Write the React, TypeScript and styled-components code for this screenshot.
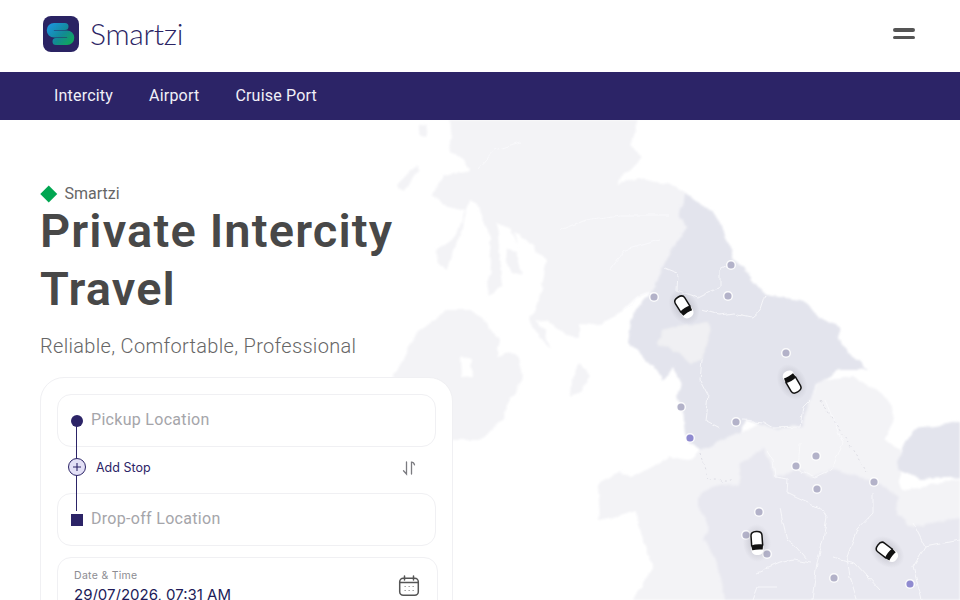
import React from "react";
import styled, { createGlobalStyle } from "styled-components";

const GlobalStyle = createGlobalStyle`
  html, body {
    margin: 0;
    padding: 0;
    background: #fff;
    font-family: Inter, "Liberation Sans", sans-serif;
  }
`;

const Page = styled.div`
  width: 960px;
  height: 600px;
  overflow: hidden;
`;

const Header = styled.header`
  height: 72px;
  box-sizing: border-box;
  display: flex;
  align-items: center;
  justify-content: space-between;
  padding: 0 45px 4px 43px;
  background: #fff;
`;

const Brand = styled.div`
  display: flex;
  align-items: center;
  gap: 11px;
`;

const Wordmark = styled.span`
  padding-bottom: 3px;
  font-family: Lato, sans-serif;
  font-weight: 300;
  font-size: 30px;
  letter-spacing: -0.3px;
  color: #2b2464;
`;

const MenuButton = styled.button`
  display: flex;
  flex-direction: column;
  gap: 4px;
  padding: 0;
  border: none;
  background: none;
  margin-top: -1px;
`;

const MenuBar = styled.span`
  display: block;
  width: 22px;
  height: 3.5px;
  border-radius: 2px;
  background: #555;
`;

const Nav = styled.nav`
  height: 48px;
  box-sizing: border-box;
  display: flex;
  align-items: center;
  gap: 36px;
  padding: 0 0 2px 54px;
  background: #2c2467;
`;

const NavLink = styled.a`
  font-family: Roboto, sans-serif;
  font-size: 16px;
  letter-spacing: 0.2px;
  color: #f1f0f8;
`;

const Hero = styled.section`
  position: relative;
  height: 480px;
  padding: 64px 0 0 40px;
  box-sizing: border-box;
  overflow: hidden;
`;

const MapLayer = styled.svg`
  position: absolute;
  left: 0;
  top: 0;
`;

const HeroContent = styled.div`
  position: relative;
`;

const Tag = styled.div`
  display: flex;
  align-items: center;
  gap: 8px;
  height: 18px;
  font-family: Roboto, sans-serif;
  font-size: 16px;
  color: #666;
`;

const Diamond = styled.span`
  width: 11.5px;
  height: 11.5px;
  margin: 1px 2.5px 0;
  background: #00a651;
  transform: rotate(45deg);
`;

const Title = styled.h1`
  margin: 0;
  width: 400px;
  font-family: Roboto, sans-serif;
  font-weight: 600;
  font-size: 47px;
  line-height: 58px;
  letter-spacing: 1.15px;
  color: #484848;
`;

const Subtitle = styled.p`
  margin: 14px 0 0;
  font-family: Roboto, sans-serif;
  font-weight: 300;
  font-size: 20px;
  line-height: 28px;
  letter-spacing: 0.32px;
  color: #666;
`;

const Card = styled.div`
  position: relative;
  width: 413px;
  box-sizing: border-box;
  margin-top: 17px;
  padding: 16px 16px 24px;
  background: #fff;
  border: 1px solid #f0f0f3;
  border-radius: 24px;
`;

const Field = styled.div`
  height: 53px;
  box-sizing: border-box;
  display: flex;
  align-items: center;
  padding: 0 0 2px 33px;
  border: 1px solid #f0f0f3;
  border-radius: 14px;
  font-family: Roboto, sans-serif;
  font-size: 16px;
  letter-spacing: 0.3px;
  color: #a5a5aa;
  background: #fff;
`;

const StopRow = styled.div`
  height: 46px;
  box-sizing: border-box;
  display: flex;
  align-items: center;
  justify-content: space-between;
  padding: 0 19px 5px 39px;
`;

const AddStop = styled.span`
  font-size: 12.5px;
  font-weight: 400;
  color: #2c2467;
`;

const RouteLine = styled.span`
  position: absolute;
  left: 35px;
  top: 43px;
  width: 1px;
  height: 90px;
  background: #2c2467;
`;

const RouteDot = styled.span`
  position: absolute;
  left: 30px;
  top: 37px;
  width: 12px;
  height: 12px;
  border-radius: 50%;
  background: #2c2467;
`;

const RouteSquare = styled.span`
  position: absolute;
  left: 30px;
  top: 136px;
  width: 12px;
  height: 12px;
  background: #2c2467;
`;

const RoutePlus = styled.span`
  position: absolute;
  left: 27px;
  top: 80px;
  width: 18px;
  height: 18px;
  box-sizing: border-box;
  display: flex;
  align-items: center;
  justify-content: center;
  border: 1px solid #2c2467;
  border-radius: 50%;
  background: #e3e0f6;
`;

const DateField = styled.div`
  width: 381px;
  height: 64px;
  box-sizing: border-box;
  margin-top: 11px;
  padding: 11px 17px 0 16px;
  display: flex;
  justify-content: space-between;
  border: 1px solid #f0f0f3;
  border-radius: 14px;
`;

const DateLabel = styled.div`
  font-size: 10.5px;
  line-height: 13px;
  letter-spacing: 0.3px;
  color: #8c8c92;
`;

const DateValue = styled.div`
  margin-top: 4px;
  font-size: 15px;
  line-height: 18px;
  color: #211b58;
`;

const CalendarWrap = styled.span`
  margin-top: 6px;
`;

type Point = [number, number];

const toPoints = (pts: Point[]) => pts.map(([x, y]) => `${x},${y}`).join(" ");

const LIGHT = "#f3f3f6";
const MID = "#e8e8f0";
const DARK = "#e3e4ed";

const regions: { fill: string; pts: Point[] }[] = [
  {
    // scotland
    fill: LIGHT,
    pts: [
      [448, 110], [642, 110], [630, 147], [642, 157], [627, 173], [610, 192], [587, 193],
      [612, 187], [635, 178], [673, 185], [685, 195], [680, 217], [687, 227], [673, 247],
      [663, 267], [652, 293], [637, 297], [620, 313], [597, 325], [580, 323], [580, 338],
      [553, 327], [538, 318], [552, 348], [540, 337], [530, 317], [537, 310], [543, 280],
      [547, 260], [523, 237], [515, 232], [518, 245], [510, 228], [497, 223], [500, 258],
      [503, 285], [493, 293], [487, 293], [492, 265], [490, 237], [478, 205], [470, 200],
      [448, 270], [440, 265], [437, 250], [455, 237], [465, 210], [445, 205], [432, 195],
      [445, 175], [470, 170], [452, 150],
    ],
  },
  { fill: LIGHT, pts: [[506, 250], [516, 252], [522, 272], [512, 274], [505, 262]] },
  { fill: LIGHT, pts: [[418, 127], [426, 126], [428, 134], [421, 136]] },
  { fill: LIGHT, pts: [[396, 186], [416, 165], [420, 170], [402, 192]] },
  {
    // ireland
    fill: LIGHT,
    pts: [
      [393, 377], [417, 333], [447, 310], [473, 310], [500, 340], [497, 357], [517, 353],
      [523, 377], [507, 407], [503, 420], [480, 440], [420, 440],
    ],
  },
  {
    // isle of man
    fill: LIGHT,
    pts: [[580, 363], [590, 375], [582, 390], [571, 397], [572, 380]],
  },
  {
    // wales and the base of england
    fill: LIGHT,
    pts: [
      [620, 470], [632, 478], [670, 457], [688, 460], [700, 450], [740, 433], [810, 400],
      [820, 380], [853, 376], [887, 398], [895, 420], [885, 440], [900, 450], [900, 490],
      [970, 478], [970, 610], [627, 610], [640, 590], [653, 567], [640, 530], [637, 510],
      [620, 515], [600, 520], [598, 485],
    ],
  },
  {
    // north of england
    fill: DARK,
    pts: [
      [685, 195], [713, 212], [720, 223], [733, 257], [750, 277], [765, 295], [800, 300],
      [820, 317], [840, 328], [837, 337], [853, 357], [868, 370], [840, 370], [817, 383],
      [810, 400], [803, 427], [773, 428], [745, 420], [740, 433], [700, 450], [685, 437],
      [683, 407], [677, 397], [682, 383], [673, 367], [663, 383], [657, 370], [628, 343],
      [633, 310], [652, 293], [663, 267], [673, 247], [687, 227], [680, 217],
    ],
  },
  {
    // lakes patch
    fill: "#f0f0f3",
    pts: [[663, 330], [683, 324], [710, 322], [712, 332], [702, 360], [690, 362], [673, 350], [657, 343]],
  },
  {
    // midlands
    fill: MID,
    pts: [
      [698, 497], [720, 483], [737, 487], [740, 463], [763, 448], [775, 477], [800, 470],
      [812, 478], [832, 470], [860, 477], [873, 480], [898, 497], [897, 515], [913, 527],
      [970, 517], [970, 610], [727, 610], [718, 563], [703, 540], [710, 527], [698, 507],
    ],
  },
  {
    // east anglia
    fill: DARK,
    pts: [[898, 460], [912, 430], [970, 420], [970, 478], [920, 480], [900, 472]],
  },
];

const borders: Point[][] = [
  [[743, 420], [763, 422], [773, 428], [800, 427], [803, 407], [810, 400]],
  [[767, 450], [773, 460], [775, 477], [788, 479], [787, 493], [795, 497], [823, 510], [827, 517], [823, 540], [817, 563], [812, 600]],
  [[800, 443], [798, 470], [815, 478], [832, 470], [843, 443], [825, 400]],
  [[873, 493], [873, 513], [857, 530], [847, 557], [850, 577], [857, 600]],
  [[913, 523], [925, 547], [913, 567], [922, 600]],
  [[780, 507], [783, 523], [787, 540], [797, 548], [807, 560]],
  [[757, 573], [780, 563], [793, 560], [812, 563]],
  [[752, 600], [757, 587], [777, 587]],
  [[833, 557], [855, 563], [880, 590]],
  [[925, 547], [960, 540]],
  [[665, 268], [678, 273], [677, 290], [698, 298], [720, 287], [720, 270], [733, 263]],
  [[702, 310], [720, 315], [733, 313], [752, 317], [760, 310], [765, 295]],
  [[652, 293], [637, 297], [625, 310]],
  [[702, 360], [700, 380], [708, 395], [705, 420], [720, 428]],
  [[477, 170], [495, 150], [520, 142]],
  [[560, 230], [585, 220], [620, 215], [670, 215]],
  [[610, 270], [625, 250], [660, 240]],
];

const dashed: Point[][] = [
  [[820, 400], [867, 472]],
  [[700, 453], [708, 480], [733, 480]],
];

const dots: { x: number; y: number; purple?: boolean }[] = [
  { x: 731, y: 265 },
  { x: 654, y: 297 },
  { x: 728, y: 296 },
  { x: 786, y: 353 },
  { x: 681, y: 407 },
  { x: 690, y: 438, purple: true },
  { x: 736, y: 422 },
  { x: 816, y: 456 },
  { x: 796, y: 466 },
  { x: 817, y: 489 },
  { x: 874, y: 482 },
  { x: 759, y: 512 },
  { x: 746, y: 535 },
  { x: 767, y: 554 },
  { x: 834, y: 578 },
  { x: 910, y: 584, purple: true },
];

const cars = [
  { x: 684, y: 307, angle: -32 },
  { x: 792, y: 382, angle: -30, flipped: true },
  { x: 757, y: 543, angle: -4 },
  { x: 887, y: 552, angle: -52 },
];

const Car = ({ x, y, angle, flipped }: { x: number; y: number; angle: number; flipped?: boolean }) => (
  <g transform={`translate(${x} ${y}) rotate(${flipped ? angle + 180 : angle})`}>
    <ellipse cx={0} cy={0} rx={14} ry={19} fill="url(#carShadow)" />
    <rect x={-6} y={-12} width={12} height={24} rx={5} fill="#fff" />
    <path d="M-5.5 3V-7.5C-5.5 -10.2 -3 -11.5 0 -11.5C3 -11.5 5.5 -10.2 5.5 -7.5V3" fill="none" stroke="#111" strokeWidth={1.5} />
    <path d="M-6 2C-2 1 2 1 6 2L5.2 7C2 6.4 -2 6.4 -5.2 7Z" fill="#111" />
  </g>
);

const UkMap = () => (
  <MapLayer width={960} height={480} viewBox="0 120 960 480">
    <defs>
      <radialGradient id="carShadow">
        <stop offset="0%" stopColor="#8a8a96" stopOpacity={0.45} />
        <stop offset="100%" stopColor="#8a8a96" stopOpacity={0} />
      </radialGradient>
      <filter id="coast" x={0} y={120} width={960} height={480} filterUnits="userSpaceOnUse">
        <feTurbulence type="fractalNoise" baseFrequency="0.07" numOctaves={3} seed={4} result="noise" />
        <feDisplacementMap in="SourceGraphic" in2="noise" scale={7} xChannelSelector="R" yChannelSelector="G" />
        <feGaussianBlur stdDeviation={0.8} />
      </filter>
      <filter id="lines" x={0} y={120} width={960} height={480} filterUnits="userSpaceOnUse">
        <feTurbulence type="fractalNoise" baseFrequency="0.1" numOctaves={2} seed={9} result="noise" />
        <feDisplacementMap in="SourceGraphic" in2="noise" scale={5} xChannelSelector="R" yChannelSelector="G" />
        <feGaussianBlur stdDeviation={0.4} />
      </filter>
    </defs>
    <g filter="url(#coast)">
      {regions.map((r, i) => (
        <polygon key={i} points={toPoints(r.pts)} fill={r.fill} />
      ))}
      <polygon points="460,357 472,360 473,377 461,378" fill="#fff" />
    </g>
    <g filter="url(#lines)">
      {borders.map((b, i) => (
        <polyline key={i} points={toPoints(b)} fill="none" stroke="#fafafc" strokeOpacity={0.8} strokeWidth={1} strokeLinejoin="round" />
      ))}
      {dashed.map((b, i) => (
        <polyline key={i} points={toPoints(b)} fill="none" stroke="#dcdce4" strokeWidth={1} strokeDasharray="2 3" />
      ))}
    </g>
    {dots.map((d, i) => (
      <circle key={i} cx={d.x} cy={d.y} r={4.3} fill={d.purple ? "#8f8ad0" : "#b3b2c9"} stroke="#fff" strokeOpacity={0.9} strokeWidth={1.5} />
    ))}
    {cars.map((c, i) => (
      <Car key={i} {...c} />
    ))}
  </MapLayer>
);

const Logo = () => (
  <svg width={36} height={36} viewBox="0 0 36 36">
    <defs>
      <linearGradient id="logoS" gradientUnits="userSpaceOnUse" x1={8} y1={8} x2={28} y2={28}>
        <stop offset="0%" stopColor="#1b93d8" />
        <stop offset="55%" stopColor="#128a94" />
        <stop offset="100%" stopColor="#10a858" />
      </linearGradient>
    </defs>
    <rect width={36} height={36} rx={8} fill="#2a2363" />
    <path
      d="M22 10.5H11a3.7 3.7 0 0 0 0 7.5H24a3.7 3.7 0 0 1 0 7.5H13"
      fill="none"
      stroke="url(#logoS)"
      strokeWidth={7}
      strokeLinecap="round"
    />
  </svg>
);

const SwapIcon = () => (
  <svg width={16} height={16} viewBox="0 0 16 16" fill="none" stroke="#7b7b80" strokeWidth={1.3} strokeLinecap="round">
    <path d="M5.5 2V14L2.5 10.8" />
    <path d="M10.5 14V2.2C12 2.2 13 3 13.5 4.8" />
  </svg>
);

const CalendarIcon = () => (
  <svg width={22} height={22} viewBox="0 0 22 22" fill="none" stroke="#555" strokeWidth={1.5} strokeLinecap="round">
    <rect x={1.7} y={3.2} width={18.6} height={17} rx={3.5} />
    <path d="M6.5 1V5M15.5 1V5M2 7.5H20" />
    <path d="M7 11.5H7.3M11 11.5H11.3M15 11.5H15.3M7 15.5H7.3M11 15.5H11.3M15 15.5H15.3" stroke="#888" strokeWidth={1.2} />
  </svg>
);

const PlusIcon = () => (
  <svg width={10} height={10} viewBox="0 0 10 10" stroke="#2c2467" strokeWidth={1.1}>
    <path d="M5 1V9M1 5H9" />
  </svg>
);

export default function App() {
  return (
    <Page>
      <GlobalStyle />
      <Header>
        <Brand>
          <Logo />
          <Wordmark>Smartzi</Wordmark>
        </Brand>
        <MenuButton type="button" aria-label="Menu">
          <MenuBar />
          <MenuBar />
        </MenuButton>
      </Header>
      <Nav>
        <NavLink>Intercity</NavLink>
        <NavLink>Airport</NavLink>
        <NavLink>Cruise Port</NavLink>
      </Nav>
      <Hero>
        <UkMap />
        <HeroContent>
          <Tag>
            <Diamond />
            Smartzi
          </Tag>
          <Title>Private Intercity Travel</Title>
          <Subtitle>Reliable, Comfortable, Professional</Subtitle>
          <Card>
            <Field>Pickup Location</Field>
            <StopRow>
              <AddStop>Add Stop</AddStop>
              <SwapIcon />
            </StopRow>
            <Field>Drop-off Location</Field>
            <RouteLine />
            <RouteDot />
            <RoutePlus>
              <PlusIcon />
            </RoutePlus>
            <RouteSquare />
            <DateField>
              <div>
                <DateLabel>Date &amp; Time</DateLabel>
                <DateValue>29/07/2026, 07:31 AM</DateValue>
              </div>
              <CalendarWrap>
                <CalendarIcon />
              </CalendarWrap>
            </DateField>
          </Card>
        </HeroContent>
      </Hero>
    </Page>
  );
}
